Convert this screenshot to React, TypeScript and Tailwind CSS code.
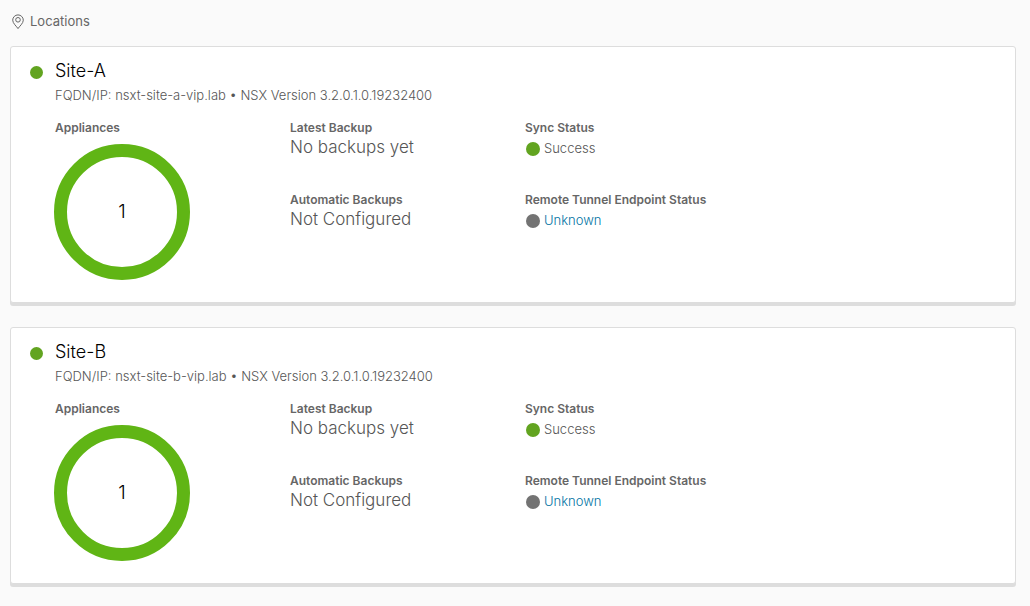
import React from "react";

type Status = "success" | "unknown";

interface Site {
  name: string;
  fqdn: string;
  version: string;
  appliances: number;
  latestBackup: string;
  automaticBackups: string;
}

const sites: Site[] = [
  {
    name: "Site-A",
    fqdn: "nsxt-site-a-vip.lab",
    version: "3.2.0.1.0.19232400",
    appliances: 1,
    latestBackup: "No backups yet",
    automaticBackups: "Not Configured",
  },
  {
    name: "Site-B",
    fqdn: "nsxt-site-b-vip.lab",
    version: "3.2.0.1.0.19232400",
    appliances: 1,
    latestBackup: "No backups yet",
    automaticBackups: "Not Configured",
  },
];

function PinIcon() {
  return (
    <svg width="12" height="16" viewBox="0 0 12 16" fill="none" stroke="#666" aria-hidden="true">
      <path d="M6 14.6C4.6 12.4.7 9.3.7 6.2a5.3 5.3 0 0 1 10.6 0c0 3.1-3.9 6.2-5.3 8.4Z" />
      <circle cx="6" cy="5.8" r="2.3" />
    </svg>
  );
}

function StatusLine({ status, children }: { status: Status; children: React.ReactNode }) {
  const color = status === "success" ? "bg-[#62a420]" : "bg-[#737373]";
  return (
    <span className="flex items-center gap-1 pt-[2px] pl-px text-[13px]">
      <span className={`size-3.5 shrink-0 rounded-full ${color}`} />
      {children}
    </span>
  );
}

function Donut({ value }: { value: number }) {
  return (
    <svg width="136" height="136" viewBox="0 0 136 136" className="-ml-px mt-2 block" role="img" aria-label={`${value} appliance`}>
      <circle cx="68" cy="68" r="61.5" fill="none" stroke="#60b515" strokeWidth="13" />
      <text x="68" y="74" textAnchor="middle" fontSize="19" fontWeight="300" fill="#000">
        {value}
      </text>
    </svg>
  );
}

function Field({ label, children }: { label: string; children: React.ReactNode }) {
  return (
    <div>
      <dt className="text-xs font-semibold text-[#666]">{label}</dt>
      <dd className="flex h-6 items-center text-[17px] font-light text-[#565656]">{children}</dd>
    </div>
  );
}

function SiteCard({ site }: { site: Site }) {
  return (
    <article className="flex rounded-[3px] border border-[#ddd] bg-white pt-3 pb-[22px] pl-[19px] shadow-[0_3px_0_0_#ddd]">
      <span className="mt-[7px] mr-3 size-[13px] shrink-0 rounded-full bg-[#62a420]" />
      <div className="min-w-0 flex-1">
        <h2 className="text-lg leading-6 font-light text-black">{site.name}</h2>
        <p className="text-[13px] leading-6 font-light text-[#565656]">
          FQDN/IP: {site.fqdn} • NSX Version {site.version}
        </p>
        <div className="mt-[13px] flex">
          <section className="w-[235px] shrink-0">
            <h3 className="text-xs font-semibold text-[#666]">Appliances</h3>
            <Donut value={site.appliances} />
          </section>
          <dl className="flex w-[235px] shrink-0 flex-col gap-8">
            <Field label="Latest Backup">{site.latestBackup}</Field>
            <Field label="Automatic Backups">{site.automaticBackups}</Field>
          </dl>
          <dl className="flex flex-col gap-8">
            <Field label="Sync Status">
              <StatusLine status="success">Success</StatusLine>
            </Field>
            <Field label="Remote Tunnel Endpoint Status">
              <StatusLine status="unknown">
                <a href="#" className="text-[#0072a3]">
                  Unknown
                </a>
              </StatusLine>
            </Field>
          </dl>
        </div>
      </div>
    </article>
  );
}

export default function App() {
  return (
    <main className="min-h-screen bg-[#fafafa] pt-3 pr-[14px] pb-5 pl-[10px] font-['Inter',sans-serif]">
      <h1 className="flex h-5 items-center gap-[6px] pl-[2px] text-[13px] text-[#666]">
        <PinIcon />
        Locations
      </h1>
      <div className="mt-[14px] flex flex-col gap-6">
        {sites.map((site) => (
          <SiteCard key={site.name} site={site} />
        ))}
      </div>
    </main>
  );
}
